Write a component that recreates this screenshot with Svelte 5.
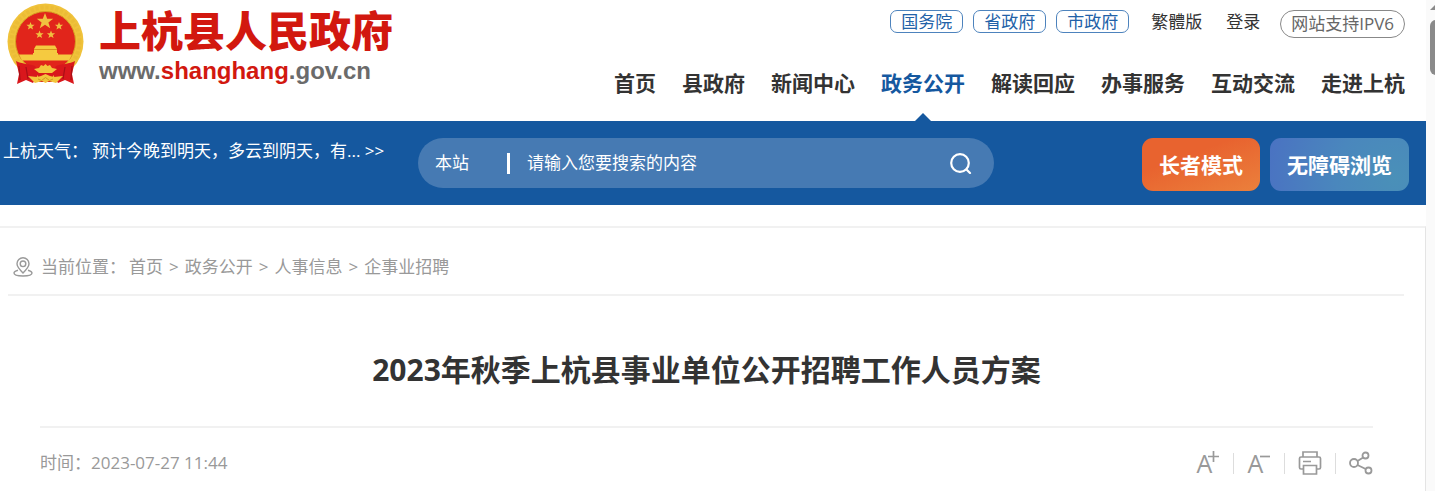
<script>
  const levels = ['国务院', '省政府', '市政府'];
  const nav = ['首页', '县政府', '新闻中心', '政务公开', '解读回应', '办事服务', '互动交流', '走进上杭'];
  const crumbs = ['首页', '政务公开', '人事信息', '企事业招聘'];
  const current = '政务公开';
</script>

<div class="shell">
  <div class="page">
    <header>
      <a class="brand" href="#home">
        <svg class="emblem" viewBox="0 0 77 82" aria-hidden="true">
          <circle cx="38.5" cy="38.5" r="38" fill="#f0c23a" />
          <circle cx="38.5" cy="38.5" r="34" fill="none" stroke="#d9a526" stroke-width="4" stroke-dasharray="3 2" opacity=".2" />
          <circle cx="38.5" cy="38.5" r="30" fill="#e1251b" stroke="#d8a323" stroke-width="1" />
          <path d="M38 10l2.200 5.700h6l-4.800 3.700 1.800 5.900-5.200-3.500-5.200 3.500 1.800-5.900-4.800-3.700h6z" fill="#f0c040" />
          <path id="star" d="M23.500 19l1.100 2.800h3l-2.400 1.900.9 2.900-2.600-1.700-2.600 1.700.9-2.900-2.400-1.900h3z" fill="#f0c040" />
          <use href="#star" x="28.500" />
          <use href="#star" x="9" y="8.500" />
          <use href="#star" x="20.500" y="8.500" />
          <path d="M29 42.500h19l2 3.500H27zM27 47h23v3H27zM26 50h25v1.500h14l-3 6H15l-3-6h14z" fill="#f5ca40" />
          <path d="M27 46.500h23" stroke="#d9931f" />
          <path d="M9 58c5 3 14 3 19 5l4 7-6 10-7-3-9 4 2-10zM68 58c-5 3-14 3-19 5l-4 7 6 10 7-3 9 4-2-10z" fill="#d9171c" />
          <path d="M12 63l1 14M19 64l2 12M65 63l-1 14M58 64l-2 12" stroke="#a80f16" stroke-width="1.200" fill="none" />
          <path d="M30 67h17l-2 12H32z" fill="#d9171c" />
          <path d="M27 66l5-1 2-3 2.500 1 2-2 2 2 2.500-1 2 3 5 1-5 4H32z" fill="#f3c63c" />
          <path d="M21 73l9 1 4-1 4.500-2 4.500 2 4 1 9-1-7 7-7-2-3.500 2-3.500-2-7 2z" fill="#f3c63c" />
          <path d="M31 76l3.500 1.500 4-3 4 3 3.500-1.500" stroke="#cf9a20" fill="none" />
        </svg>
        <span class="names">
          <strong>上杭县人民政府</strong>
          <span class="domain">www.<b>shanghang</b>.gov.cn</span>
        </span>
      </a>
      <div class="menus">
        <div class="top">
          {#each levels as l}<a class="level" href="#{l}">{l}</a>{/each}
          <a class="plain" href="#tw">繁體版</a>
          <a class="plain" href="#login">登录</a>
          <a class="ipv" href="#ipv6">网站支持IPV6</a>
        </div>
        <nav>
          {#each nav as n}<a class:active={n === current} href="#{n}">{n}</a>{/each}
        </nav>
      </div>
    </header>

    <div class="band">
      <div class="weather"><span>上杭天气：</span><a href="#weather">预计今晚到明天，多云到阴天，有... &gt;&gt;</a></div>
      <form class="search">
        <select aria-label="搜索范围"><option>本站</option></select>
        <i class="bar"></i>
        <input type="text" aria-label="搜索" placeholder="请输入您要搜索的内容" />
        <button type="button" aria-label="搜索">
          <svg width="22" height="22" viewBox="0 0 22 22" fill="none" stroke="#fff" stroke-width="2.200" stroke-linecap="round"><circle cx="10" cy="11" r="8.800" /><path d="M16.500 17.500l3.500 3.500" /></svg>
        </button>
      </form>
      <div class="modes">
        <button type="button" class="elder">长者模式</button>
        <button type="button" class="access">无障碍浏览</button>
      </div>
    </div>

    <main>
      <div class="crumbs">
        <svg width="20" height="20" viewBox="0 0 20 20" fill="none" stroke="#9a9a9a" stroke-width="1.400"><path d="M10 16C6 12 4 9.500 4 6.800a6 6 0 0 1 12 0C16 9.500 14 12 10 16z" /><circle cx="10" cy="6.800" r="2.800" /><path d="M5 13.200c-2.500.6-4 1.700-4 2.900C1 17.800 5 19 10 19s9-1.200 9-2.900c0-1.200-1.500-2.300-4-2.900" /></svg>
        <span>当前位置：</span>
        {#each crumbs as c, i}{#if i}<span class="sep">&gt;</span>{/if}<a href="#{c}">{c}</a>{/each}
      </div>
      <article>
        <h1>2023年秋季上杭县事业单位公开招聘工作人员方案</h1>
        <div class="meta">
          <span>时间：2023-07-27 11:44</span>
          <div class="tools">
            <button type="button" class="letter" aria-label="放大字体">A<svg width="11" height="11" viewBox="0 0 11 11" stroke="#999" stroke-width="1.700"><path d="M0 5.500h11M5.500 0v11" /></svg></button>
            <i></i>
            <button type="button" class="letter" aria-label="缩小字体">A<svg width="11" height="11" viewBox="0 0 11 11" stroke="#999" stroke-width="1.700"><path d="M1 5.500h10" /></svg></button>
            <i></i>
            <button type="button" aria-label="打印">
              <svg width="24" height="24" viewBox="0 0 24 24" fill="none" stroke="#999" stroke-width="1.700"><path d="M5 6V1h14v5M5.500 18H3c-1 0-1.500-.6-1.500-1.500v-9C1.500 6.600 2 6 3 6h18c1 0 1.500.6 1.500 1.500v9c0 .9-.5 1.500-1.500 1.500h-2.500M5.500 14.500h13V23h-13zM5 10.500h8" /></svg>
            </button>
            <i></i>
            <button type="button" aria-label="分享">
              <svg width="24" height="24" viewBox="0 0 24 24" fill="none" stroke="#999" stroke-width="1.800"><circle cx="5" cy="12" r="4" /><circle cx="16.500" cy="4.500" r="3" /><circle cx="19.500" cy="19.500" r="3" /><path d="M8.500 10l5.700-3.500M8.500 14l8.200 4" /></svg>
            </button>
          </div>
        </div>
      </article>
    </main>
  </div>
  <div class="scroll" aria-hidden="true"><span class="up"></span><span class="thumb"></span></div>
</div>

<style>
  :global(body) {
    margin: 0;
    background: #fff;
  }
  .shell {
    display: flex;
    height: 100vh;
    overflow: hidden;
    font: 17px/24px "Open Sans", "Noto Sans CJK SC", sans-serif;
    color: #333;
  }
  a {
    color: inherit;
    text-decoration: none;
  }
  button, input, select {
    font: inherit;
    color: inherit;
    border: 0;
    padding: 0;
    margin: 0;
    background: none;
    outline: 0;
  }
  svg {
    display: block;
    flex: none;
  }
  .page {
    flex: 1;
    min-width: 0;
    display: flex;
    flex-direction: column;
  }
  header {
    display: flex;
    justify-content: space-between;
    height: 121px;
    padding: 0 21px 0 7px;
    flex: none;
  }
  .brand {
    display: flex;
    gap: 15px;
    padding-top: 3px;
  }
  .emblem {
    width: 77px;
    height: 82px;
  }
  .names {
    display: flex;
    flex-direction: column;
    white-space: nowrap;
    padding-top: 6px;
  }
  .names strong {
    font: 900 42px/48px "Liberation Sans", "Noto Sans CJK SC", sans-serif;
    color: #d2180f;
  }
  .domain {
    font: bold 24px/28px "Liberation Sans", sans-serif;
    color: #6b6b6b;
  }
  .domain b {
    color: #d2180f;
  }
  .menus {
    display: flex;
    flex-direction: column;
    justify-content: space-between;
    align-items: flex-end;
    padding-top: 10px;
    white-space: nowrap;
  }
  .top {
    display: flex;
    align-items: flex-start;
  }
  .level {
    border: 1px solid #4d83bd;
    border-radius: 7px;
    padding: 0 10px;
    line-height: 21px;
    margin-right: 10px;
    color: #2262a8;
  }
  .plain {
    margin-left: 12px;
    margin-right: 12px;
  }
  .ipv {
    border: 1px solid #888;
    border-radius: 14px;
    padding: 0 10px;
    line-height: 26px;
    margin-left: 8px;
    color: #666;
  }
  nav {
    display: flex;
    gap: 26px;
    font-size: 21px;
    font-weight: bold;
    line-height: 76px;
  }
  nav a {
    position: relative;
  }
  nav .active {
    color: #15589f;
  }
  nav .active::after {
    content: "";
    position: absolute;
    left: 50%;
    bottom: 0;
    margin-left: -8px;
    border: 8px solid transparent;
    border-top: 0;
    border-bottom-color: #15589f;
  }
  .band {
    display: flex;
    align-items: flex-start;
    height: 67px;
    padding: 17px 17px 0 3px;
    background: #15589f;
    color: #fff;
    flex: none;
    white-space: nowrap;
  }
  .weather {
    display: flex;
    gap: 4px;
    flex: 0 0 415px;
    line-height: 26px;
  }
  .search {
    flex: 0 1 576px;
    display: flex;
    align-items: center;
    height: 50px;
    box-sizing: border-box;
    padding: 0 22px 0 17px;
    border-radius: 25px;
    background: #467ab3;
  }
  .search select {
    appearance: none;
    width: 72px;
  }
  .bar {
    width: 3px;
    height: 21px;
    margin-right: 17px;
    background: #fff;
  }
  .search input {
    flex: 1;
    min-width: 0;
  }
  .search input::placeholder {
    color: #fff;
    opacity: 1;
  }
  .modes {
    display: flex;
    gap: 10px;
    margin-left: auto;
  }
  .modes button {
    height: 53px;
    padding: 0 17px;
    border-radius: 11px;
    font-size: 21px;
    font-weight: bold;
  }
  .elder {
    background: linear-gradient(160deg, #e8632f 35%, #eb803c);
  }
  .access {
    background: radial-gradient(circle at 90% 75%, #4a90b8, #4a87bd 45%, #4a72c2);
  }
  main {
    flex: 1;
    margin-top: 21px;
    border-top: 2px solid #f1f1f1;
    border-right: 1px solid #e4e4e4;
    color: #999;
  }
  .crumbs {
    display: flex;
    align-items: center;
    height: 54px;
    margin: 0 21px 0 8px;
    padding: 12px 5px 0;
    border-bottom: 2px solid #f1f1f1;
  }
  .crumbs svg {
    margin-right: 8px;
  }
  .crumbs a:first-of-type {
    margin-left: 3px;
  }
  .sep {
    margin: 0 6px;
  }
  article {
    margin: 0 52px 0 40px;
  }
  h1 {
    margin: 0;
    padding: 50px 0 32px;
    font-size: 30px;
    line-height: 48px;
    text-align: center;
    color: #333;
    border-bottom: 2px solid #f1f1f1;
  }
  .meta {
    display: flex;
    justify-content: space-between;
    align-items: center;
    height: 70px;
  }
  .tools {
    display: flex;
    align-items: center;
    gap: 13px;
  }
  .tools i {
    width: 1px;
    height: 21px;
    background: #ddd;
  }
  .tools button {
    display: flex;
    width: 24px;
    height: 24px;
  }
  .tools .letter {
    font: 25px/24px "Open Sans", sans-serif;
    justify-content: center;
  }
  .letter svg {
    margin-left: -4px;
  }
  .scroll {
    flex: 0 0 9px;
    background: #fafafa;
    display: flex;
    flex-direction: column;
    overflow: hidden;
    align-items: flex-start;
    padding-left: 4px;
    box-sizing: border-box;
  }
  .up {
    flex: none;
    margin: 3px 0 10px;
    border: 7px solid transparent;
    border-top: 0;
    border-bottom-color: #8a8a8a;
  }
  .thumb {
    flex: none;
    width: 12px;
    height: 55px;
    border-radius: 6px;
    background: #8a8a8a;
  }
</style>
